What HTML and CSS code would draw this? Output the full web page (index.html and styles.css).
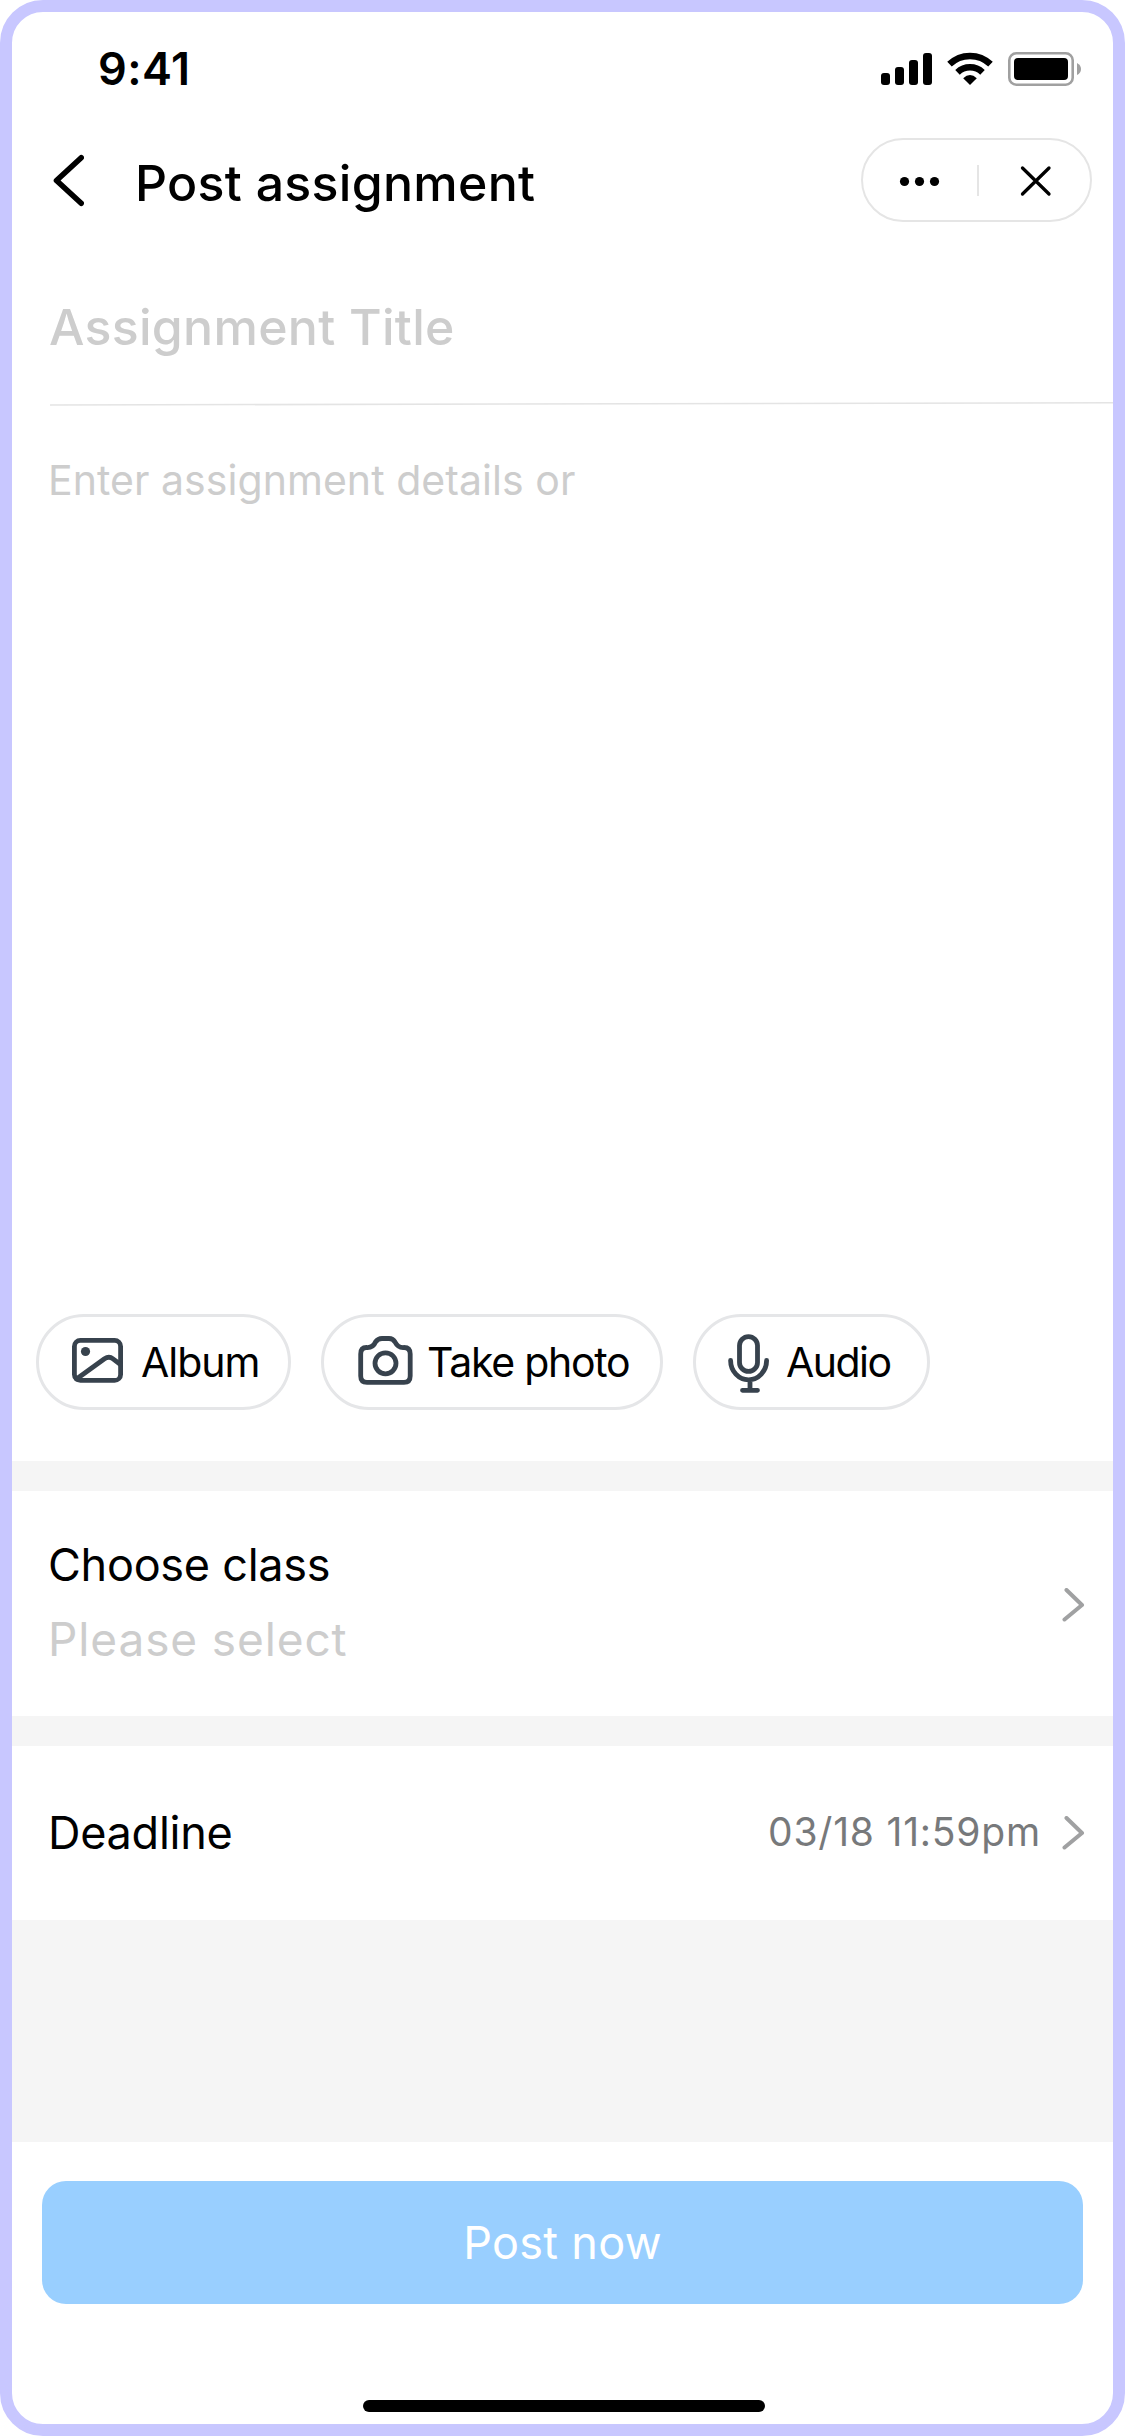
FILE: index.html
```html
<!DOCTYPE html>
<html lang="en">
<head>
<meta charset="utf-8">
<title>Post assignment</title>
<link rel="stylesheet" href="styles.css">
</head>
<body>
<main class="screen">
  <header class="status">
    <span class="time">9:41</span>
    <svg class="status-icons" width="202" height="36" viewBox="880 51 202 36">
      <rect x="881" y="73" width="9" height="12" rx="3"/>
      <rect x="895" y="67" width="9" height="18" rx="3"/>
      <rect x="909" y="60" width="9" height="25" rx="3"/>
      <rect x="923" y="53" width="9" height="32" rx="3"/>
      <g fill="none" stroke="#000">
        <path d="M949.500 64.200A29.500 29.500 0 0 1 990.500 64.200" stroke-width="6.500"/>
        <path d="M957.500 72.300A18 18 0 0 1 982.500 72.300" stroke-width="6.500"/>
      </g>
      <path d="M963.200 78.200Q970 71.800 976.800 78.200L970 85Z"/>
      <rect x="1009.300" y="53.300" width="63.400" height="31.400" rx="7" fill="none" stroke="#a0a0a0" stroke-width="2.600"/>
      <rect x="1014" y="58" width="54" height="22" rx="4"/>
      <path d="M1077 63Q1081 65 1081 69T1077 75Z" fill="#a0a0a0"/>
    </svg>
  </header>
  <nav class="nav">
    <svg class="back" width="32" height="56" viewBox="52 154 32 56"><path d="M81.200 158.700L56.500 181.500L81.200 204.300"/></svg>
    <h1 class="nav-title">Post assignment</h1>
    <div class="capsule">
      <svg width="227" height="80" viewBox="863 140 227 80">
        <circle cx="904.500" cy="181.500" r="4.600"/><circle cx="919.500" cy="181.500" r="4.600"/><circle cx="934.500" cy="181.500" r="4.600"/>
        <path d="M978 165V196" stroke="#e5e5e5" stroke-width="2"/>
        <path d="M1022.500 168L1049 194M1049 168L1022.500 194" stroke="#000" stroke-width="3.300" stroke-linecap="round"/>
      </svg>
    </div>
  </nav>
  <div class="title-field">Assignment Title</div>
  <svg class="rule" width="1063" height="4" viewBox="0 0 1063 4"><path d="M0 3L1063 .8"/></svg>
  <div class="details">Enter assignment details or</div>
  <div class="tools">
    <div class="pill album">
      <svg width="52" height="46" viewBox="71 1337 52 46"><rect x="74.400" y="1340.400" width="46.200" height="40" rx="6"/><path d="M76.500 1379L104.500 1358.800Q109 1355.800 113 1358.800L120.500 1364.500"/><circle class="dot" cx="85.500" cy="1351.500" r="4.600"/></svg>
      <span class="album-text">Album</span>
    </div>
    <div class="pill photo">
      <svg width="56" height="52" viewBox="357 1335 56 52"><path d="M366.500 1347.500Q373 1348 375.500 1342Q378 1338.500 382 1338.500H389Q393 1338.500 395 1342Q398 1348 404 1347.500Q410.200 1347.500 410.200 1354V1376Q410.200 1382.300 404 1382.300H367Q360.700 1382.300 360.700 1376V1354Q360.700 1347.500 366.500 1347.500Z"/><circle cx="385.500" cy="1363.300" r="10.500"/></svg>
      <span class="photo-text">Take photo</span>
    </div>
    <div class="pill audio">
      <svg width="42" height="62" viewBox="728 1332 42 62"><rect x="739.500" y="1336.600" width="18" height="34.800" rx="9"/><path d="M730.600 1360.500A18 19.300 0 0 0 766.600 1360.500M750 1381V1390M742.500 1390.300H757.500"/></svg>
      <span class="audio-text">Audio</span>
    </div>
  </div>
  <section class="row class-row">
    <div class="labels"><span class="label">Choose class</span><span class="placeholder">Please select</span></div>
    <svg class="chevron" width="23" height="34" viewBox="1062 1588 23 34"><path d="M1066.500 1590L1082 1605L1064.500 1619.500"/></svg>
  </section>
  <section class="row deadline-row">
    <span class="label">Deadline</span>
    <span class="date">03/18 11:59pm</span>
    <svg class="chevron" width="23" height="34" viewBox="1062 1588 23 34"><path d="M1066.500 1590L1082 1605L1064.500 1619.500"/></svg>
  </section>
  <div class="spacer"></div>
  <footer class="footer">
    <button class="post" type="button">Post now</button>
    <div class="home"></div>
  </footer>
</main>
</body>
</html>
```
FILE: styles.css
```css
* { box-sizing: border-box; }
body { margin: 0; background: #fff; font-family: Inter, "Liberation Sans", sans-serif; color: #000; }
svg { display: block; flex: none; }
.screen { width: 1125px; height: 2436px; display: flex; flex-direction: column; border: 12px solid #c8c7ff; border-radius: 43px; background: #fff; overflow: hidden; white-space: nowrap; }
.status { height: 112px; display: flex; align-items: center; justify-content: space-between; padding: 0 31px 0 86px; }
.time { font-size: 45px; font-weight: 600; letter-spacing: .44px; }
.status-icons { margin-top: 2px; }
.nav { height: 114px; margin-bottom: 13px; display: flex; align-items: center; padding: 0 21px 0 40px; }
.back { fill: none; stroke: #000; stroke-width: 5.6; stroke-linecap: round; stroke-linejoin: round; }
.nav-title { margin: 4px 0 0 51px; font-size: 50px; line-height: 60px; font-weight: 500; letter-spacing: .29px; }
.capsule { width: 231px; height: 84px; margin: -2px 0 0 auto; border: 2px solid #e5e5e5; border-radius: 42px; }
.title-field { height: 151px; padding-left: 37px; font-size: 50px; line-height: 153px; font-weight: 500; letter-spacing: .28px; color: #cdcdcd; }
.rule { margin-left: 38px; stroke: #e4e4e4; stroke-width: 1.6; }
.details { flex: 1; padding: 50px 0 0 36px; font-size: 41px; line-height: 49px; letter-spacing: .05px; color: #cdcdcd; }
.tools { display: flex; gap: 30px; padding-left: 24px; margin-bottom: 51px; font-size: 41px; }
.pill { height: 96px; display: flex; align-items: center; border: 3px solid #e5e6e8; border-radius: 48px; }
.pill svg { fill: none; stroke: #37424d; stroke-width: 4.8; stroke-linecap: round; stroke-linejoin: round; }
.pill .dot { fill: #37424d; stroke: none; }
.album { width: 255px; padding-left: 32px; }
.album svg { margin: -4px 18px 0 0; }
.album-text { letter-spacing: -1.02px; }
.photo { width: 342px; padding-left: 33px; }
.photo svg { margin: -2px 14px 0 0; }
.photo-text { letter-spacing: -1.27px; }
.audio { width: 237px; padding-left: 32px; }
.audio svg { margin: 2px 16px 0 0; }
.audio-text { letter-spacing: -1.52px; }
.row { display: flex; align-items: center; border-top: 30px solid #f5f5f5; padding: 0 28px 0 36px; }
.class-row { height: 255px; }
.class-row .chevron { margin-top: 3px; }
.labels { display: flex; flex-direction: column; flex: 1; margin-top: -3px; }
.label { font-size: 45px; line-height: 74px; letter-spacing: -.27px; }
.placeholder { font-size: 46px; line-height: 74px; letter-spacing: .88px; color: #cdcdcd; }
.chevron { fill: none; stroke: #a0a1a2; stroke-width: 4; stroke-linecap: round; stroke-linejoin: round; }
.deadline-row { height: 204px; }
.date { margin: -4px 21px 0 auto; font-size: 39px; letter-spacing: .8px; color: #77797b; }
.spacer { height: 222px; background: #f5f5f5; }
.footer { height: 282px; padding: 39px 30px 0; }
.post { display: block; width: 1041px; height: 123px; border: 0; padding: 0; border-radius: 24px; background: #99cfff; color: #fff; font: 400 45px Inter, "Liberation Sans", sans-serif; letter-spacing: .3px; }
.home { width: 402px; height: 12px; margin: 96px 0 0 321px; border-radius: 6px; background: #000; }
```
